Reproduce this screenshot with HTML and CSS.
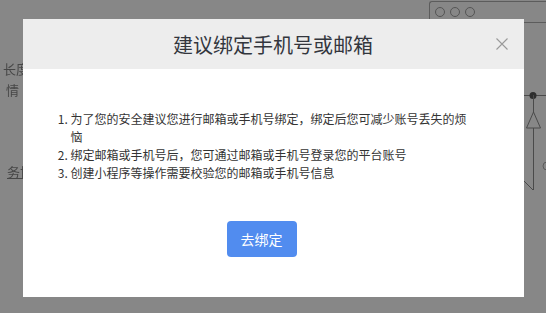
FILE: index.html
```html
<!DOCTYPE html>
<html lang="zh-CN">
<head>
    <meta charset="UTF-8">
    <meta name="viewport" content="width=device-width, initial-scale=1.0">
    <title>绑定手机号或邮箱</title>
    <link rel="stylesheet" href="styles.css">
</head>
<body>

    <!-- page behind the mask -->
    <div class="page">
        <div class="page-text t1">长度</div>
        <div class="page-text t2">情</div>
        <div class="page-text t3 link">务协议</div>

        <div class="window">
            <div class="window-bar">
                <span class="dot"></span>
                <span class="dot"></span>
                <span class="dot"></span>
            </div>
        </div>

        <svg class="diagram" width="30" height="110" viewBox="0 0 30 110">
            <line x1="0" y1="15.5" x2="30" y2="15.5" stroke="#4a4a4a" stroke-width="1"/>
            <circle cx="13" cy="15.5" r="3.5" fill="#2e2e2e"/>
            <line x1="13.5" y1="15" x2="13.5" y2="111" stroke="#4a4a4a" stroke-width="1"/>
            <polygon points="13.5,32 6.5,48 20.5,48" fill="#878787" stroke="#4a4a4a" stroke-width="1"/>
            <line x1="13.5" y1="48" x2="13.5" y2="111" stroke="#4a4a4a" stroke-width="1"/>
            <line x1="4" y1="101" x2="13.5" y2="110.5" stroke="#4a4a4a" stroke-width="1"/>
            <line x1="13.5" y1="110.5" x2="30" y2="110.5" stroke="#4a4a4a" stroke-width="1"/>
            <circle cx="27" cy="86" r="4" fill="none" stroke="#5a5a5a" stroke-width="1"/>
        </svg>
    </div>

    <!-- bind dialog -->
    <div class="mask">
        <div class="dialog">
            <div class="dialog-header">
                <h2 class="dialog-title">建议绑定手机号或邮箱</h2>
                <span class="dialog-close">
                    <svg width="12" height="12" viewBox="0 0 12 12">
                        <path d="M0.5 0.5 L11.5 11.5 M11.5 0.5 L0.5 11.5" stroke="#9a9a9a" stroke-width="1.1" fill="none"/>
                    </svg>
                </span>
            </div>
            <div class="dialog-body">
                <ol class="tips">
                    <li>为了您的安全建议您进行邮箱或手机号绑定，绑定后您可减少账号丢失的烦恼</li>
                    <li>绑定邮箱或手机号后，您可通过邮箱或手机号登录您的平台账号</li>
                    <li>创建小程序等操作需要校验您的邮箱或手机号信息</li>
                </ol>
                <button class="bind-btn">去绑定</button>
            </div>
        </div>
    </div>

</body>
</html>
```

FILE: styles.css
```css
body {
    margin: 0;
    height: 313px;
    overflow: hidden;
    background-color: #878787;
    font-family: "Noto Sans CJK SC", "Noto Sans", sans-serif;
}

/* background page (already dimmed) */
.page {
    position: fixed;
    inset: 0;
}

.page-text {
    position: absolute;
    font-size: 13px;
    line-height: 16px;
    color: #474747;
    white-space: nowrap;
}

.t1 { left: 3px; top: 61px; }
.t2 { left: 6px; top: 82px; }
.t3 { left: 7px; top: 164px; }

.link {
    text-decoration: underline;
}

.window {
    position: absolute;
    left: 429px;
    top: 1px;
    width: 130px;
    height: 60px;
    border-left: 1px solid #5c5c5c;
    border-top: 1px solid #5c5c5c;
    border-top-left-radius: 3px;
}

.window-bar {
    display: flex;
    gap: 5px;
    padding: 5px 0 0 5px;
    height: 15px;
    border-bottom: 1px solid #5c5c5c;
}

.dot {
    width: 8px;
    height: 8px;
    border: 1px solid #555;
    border-radius: 50%;
}

.diagram {
    position: absolute;
    left: 520px;
    top: 80px;
}

/* mask + dialog */
.mask {
    position: fixed;
    inset: 0;
    display: flex;
    justify-content: center;
    align-items: flex-start;
    padding-top: 19px;
}

.dialog {
    width: 501px;
    height: 278px;
    background-color: #fff;
}

.dialog-header {
    position: relative;
    height: 50px;
    background-color: #ededed;
    display: flex;
    justify-content: center;
    align-items: center;
}

.dialog-title {
    margin: 0;
    font-size: 20px;
    font-weight: normal;
    color: #33363d;
}

.dialog-close {
    position: absolute;
    right: 16px;
    top: 19px;
    width: 12px;
    height: 12px;
    display: flex;
}

.dialog-body {
    padding-top: 41px;
}

.tips {
    margin: 0;
    padding: 0 46px 0 48px;
    font-size: 12px;
    line-height: 18px;
    color: #333;
}

.bind-btn {
    display: block;
    margin: 39px 0 0 204px;
    width: 70px;
    height: 36px;
    padding: 0;
    border: none;
    border-radius: 4px;
    background-color: #518cef;
    color: #fff;
    font-family: inherit;
    font-size: 14px;
    cursor: pointer;
}
```
